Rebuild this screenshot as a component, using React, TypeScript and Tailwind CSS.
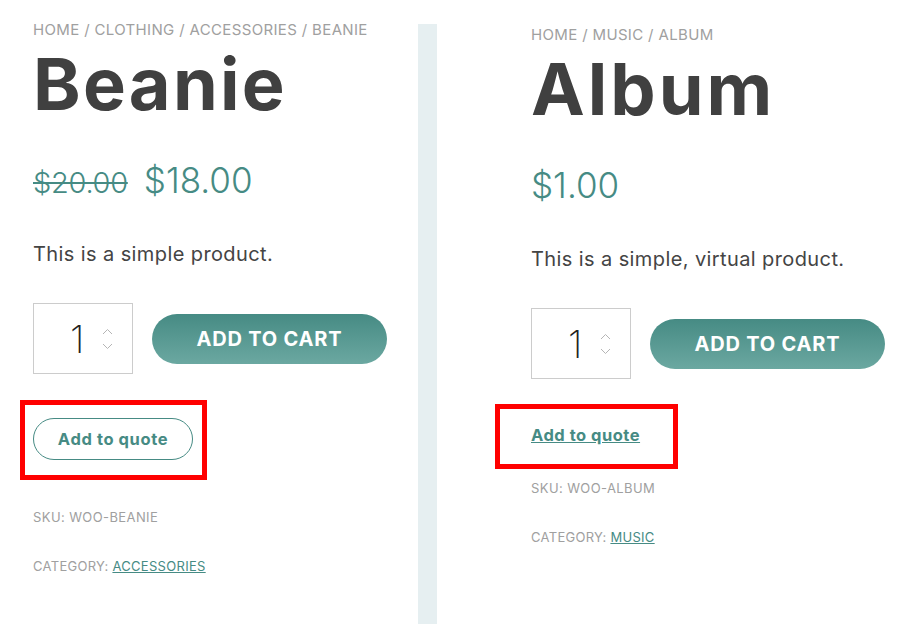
import React from "react";

const font = { fontFamily: "Inter, 'Noto Sans', sans-serif" };

function Spinner() {
  return (
    <div className="flex flex-col items-center gap-[8px]">
      <svg width="11" height="7" viewBox="0 0 11 7" fill="none">
        <path d="M1 6 L5.5 1.5 L10 6" stroke="#b5b5b5" strokeWidth="1" />
      </svg>
      <svg width="11" height="7" viewBox="0 0 11 7" fill="none">
        <path d="M1 1 L5.5 5.5 L10 1" stroke="#b5b5b5" strokeWidth="1" />
      </svg>
    </div>
  );
}

function Qty() {
  return (
    <div className="w-[100px] h-[71px] border border-[#cccccc] flex items-center pl-[36px] gap-[18px]">
      <span className="text-[38px] font-extralight text-[#222] leading-none">1</span>
      <Spinner />
    </div>
  );
}

function Cart() {
  return (
    <button className="w-[235px] h-[50px] rounded-full bg-gradient-to-b from-[#468b84] to-[#6ba8a1] text-white font-bold text-[20px] tracking-[0.8px] uppercase">
      Add to cart
    </button>
  );
}

export default function App() {
  return (
    <div className="w-[909px] h-[632px] bg-white flex overflow-hidden" style={font}>
      {/* Left product */}
      <div className="w-[418px] pl-[33px] pt-[20px]">
        <div className="text-[15px] text-[#a0a0a0] leading-[20px] tracking-[0.35px]">
          HOME / CLOTHING / ACCESSORIES / BEANIE
        </div>
        <h1 className="text-[72px] font-bold text-[#404040] leading-[80px] tracking-[2.3px] mt-[4px]">
          Beanie
        </h1>
        <div className="flex items-baseline gap-[16px] mt-[34px] text-[#468b84] leading-[44px] font-light">
          <span className="line-through text-[29px] tracking-[-0.3px]">$20.00</span>
          <span className="text-[35px]">$18.00</span>
        </div>
        <p className="text-[20px] text-[#444] leading-[28px] mt-[35px] tracking-[0.4px]">This is a simple product.</p>
        <div className="flex items-center gap-[19px] mt-[35px]">
          <Qty />
          <Cart />
        </div>
        <div className="mt-[26px] -ml-[13px] w-[187px] h-[80px] border-[5px] border-[#ff0000] pl-[8px] pt-[13px]">
          <button className="w-[160px] h-[42px] rounded-full border border-[#468b84] text-[#468b84] font-bold text-[16.5px] tracking-[0.6px]">
            Add to quote
          </button>
        </div>
        <div className="text-[13px] text-[#a0a0a0] mt-[29px] leading-[16px] tracking-[0.4px]">SKU: WOO-BEANIE</div>
        <div className="text-[13px] text-[#a0a0a0] mt-[33px] leading-[16px] tracking-[0.3px]">
          CATEGORY: <span className="text-[#468b84] underline">ACCESSORIES</span>
        </div>
      </div>

      {/* Divider */}
      <div className="w-[19px] mt-[24px] h-[600px] bg-[#e6eff1]" />

      {/* Right product */}
      <div className="flex-1 pl-[94px] pt-[25px]">
        <div className="text-[15px] text-[#a0a0a0] leading-[20px] tracking-[0.35px]">HOME / MUSIC / ALBUM</div>
        <h1 className="text-[72px] font-bold text-[#404040] leading-[80px] tracking-[3px] mt-[4px]">
          Album
        </h1>
        <div className="mt-[34px] text-[#468b84] text-[35px] leading-[44px] font-light">$1.00</div>
        <p className="text-[20px] text-[#444] leading-[28px] mt-[38px] tracking-[0.4px]">This is a simple, virtual product.</p>
        <div className="flex items-center gap-[19px] mt-[35px]">
          <Qty />
          <Cart />
        </div>
        <div className="mt-[25px] -ml-[36px] w-[183px] h-[65px] border-[5px] border-[#ff0000] pl-[31px] pt-[14px]">
          <span className="text-[#468b84] font-bold text-[16.5px] underline leading-[22px] tracking-[0.5px]">Add to quote</span>
        </div>
        <div className="text-[13px] text-[#a0a0a0] mt-[11px] leading-[16px] tracking-[0.4px]">SKU: WOO-ALBUM</div>
        <div className="text-[13px] text-[#a0a0a0] mt-[33px] leading-[16px] tracking-[0.3px]">
          CATEGORY: <span className="text-[#468b84] underline">MUSIC</span>
        </div>
      </div>
    </div>
  );
}
